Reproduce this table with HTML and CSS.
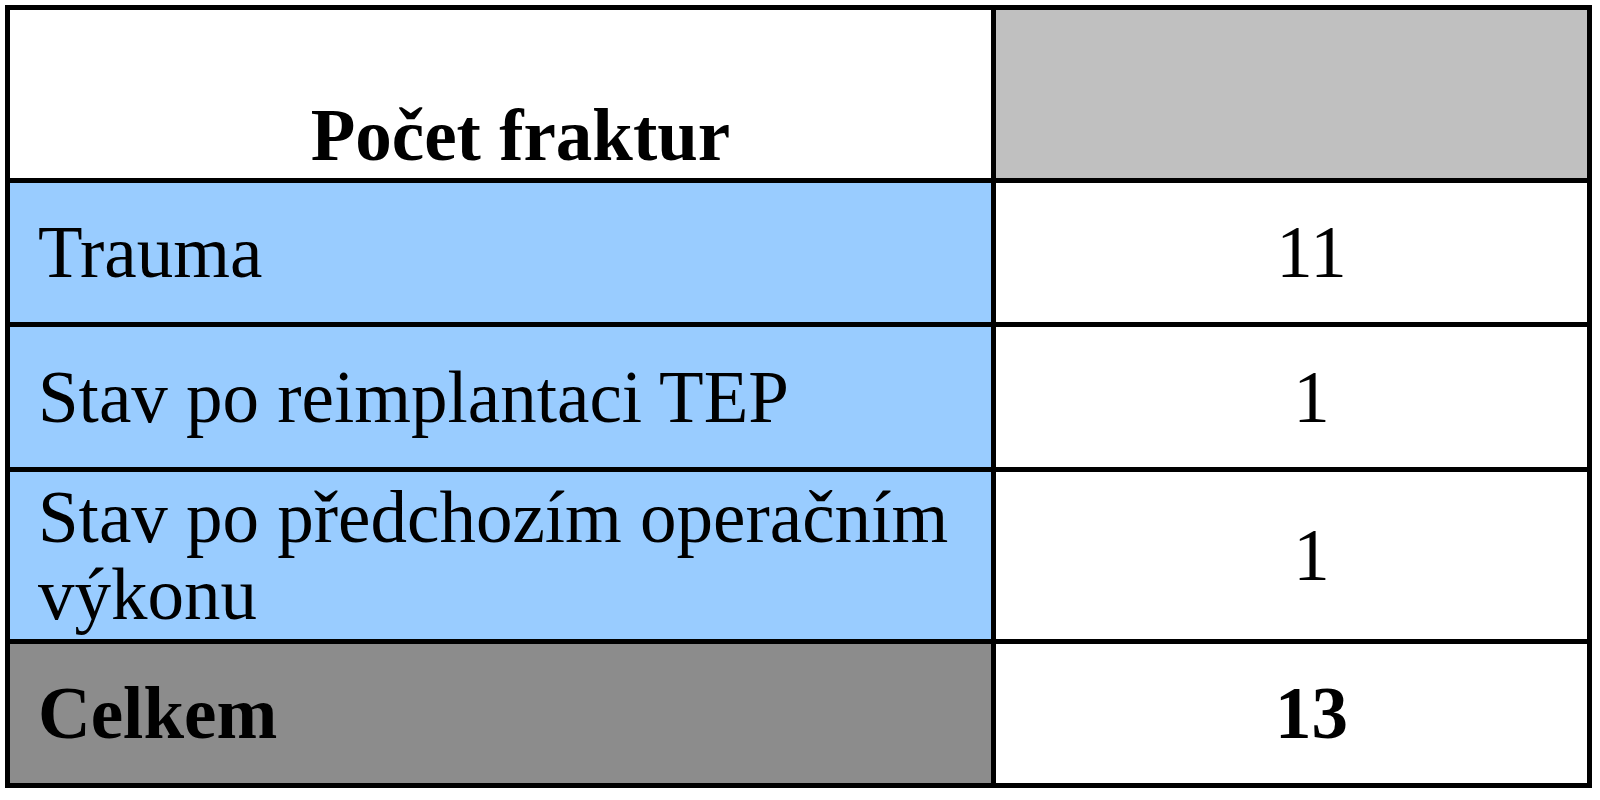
FILE: index.html
```html
<!DOCTYPE html>
<html lang="cs">
<head>
<meta charset="utf-8">
<title>Počet fraktur</title>
<link rel="stylesheet" href="styles.css">
</head>
<body>
<div class="table">
  <div class="cell head-label">Počet fraktur</div>
  <div class="cell head-empty"></div>

  <div class="cell label">Trauma</div>
  <div class="cell value">11</div>

  <div class="cell label">Stav po reimplantaci TEP</div>
  <div class="cell value">1</div>

  <div class="cell label">Stav po předchozím operačním výkonu</div>
  <div class="cell value">1</div>

  <div class="cell total-label">Celkem</div>
  <div class="cell value total-value">13</div>
</div>
</body>
</html>
```

FILE: styles.css
```css
html, body {
  margin: 0;
  padding: 0;
  background: #ffffff;
}

body {
  padding: 5px;
  font-family: "Liberation Serif", "Times New Roman", serif;
  color: #000000;
}

.table {
  box-sizing: border-box;
  width: 1587px;
  border: 5px solid #000000;
  background: #000000;
  display: grid;
  grid-template-columns: 981px 591px;
  grid-template-rows: 168px 139px 140px 167px 139px;
  gap: 5px;
}

.cell {
  background: #ffffff;
  font-size: 73px;
  line-height: 77px;
  display: flex;
  align-items: center;
}

.head-label {
  font-weight: bold;
  justify-content: center;
  align-items: flex-end;
  padding-left: 40px;
  padding-bottom: 4px;
}

.head-empty {
  background: #c0c0c0;
}

.label {
  background: #99ccff;
  padding-left: 28px;
  padding-right: 20px;
}

.value {
  justify-content: center;
  padding-left: 40px;
}

.total-label {
  background: #8c8c8c;
  font-weight: bold;
  padding-left: 28px;
}

.total-value {
  font-weight: bold;
}
```
